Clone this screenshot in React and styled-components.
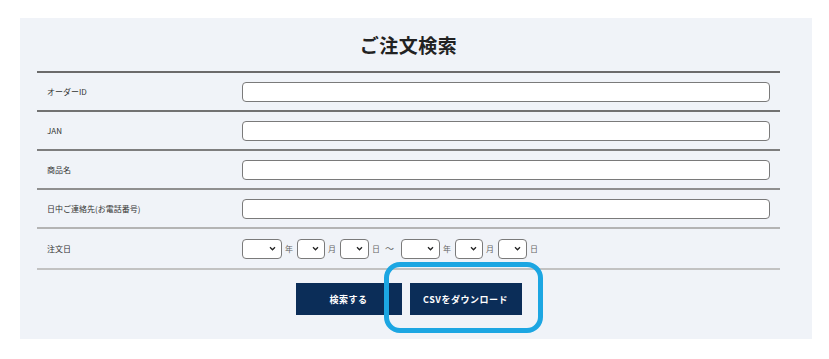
import React from 'react'
import styled, { createGlobalStyle } from 'styled-components'

const GlobalStyle = createGlobalStyle`
    body {
        margin: 0;
        background: #ffffff;
        font-family: "Noto Sans CJK JP", "Noto Sans", sans-serif;
    }
`

const fields = [
    { label: 'オーダーID', line: '#6b6b6b' },
    { label: 'JAN', line: '#727272' },
    { label: '商品名', line: '#7e7e7e' },
    { label: '日中ご連絡先(お電話番号)', line: '#8f8f8f' },
]

// small chevron drawn like the browser's select arrow
const chevron = encodeURIComponent(
    '<svg xmlns="http://www.w3.org/2000/svg" width="8" height="6" viewBox="0 0 8 6"><path d="M1 1.5 L4 4.5 L7 1.5" fill="none" stroke="#222" stroke-width="1.6"/></svg>'
)

function DateGroup({ yearWidth }) {
    return (
        <>
            <DateSelect $w={yearWidth}><option></option></DateSelect>
            <Unit>年</Unit>
            <DateSelect $w={28}><option></option></DateSelect>
            <Unit>月</Unit>
            <DateSelect $w={29}><option></option></DateSelect>
            <Unit>日</Unit>
        </>
    )
}

function App() {
    return (
        <Page>
            <GlobalStyle />
            <Panel>
                <Title>ご注文検索</Title>
                <Table>
                    {fields.map((f) => (
                        <Row key={f.label} $line={f.line}>
                            <Label>{f.label}</Label>
                            <Field>
                                <TextInput type="text" />
                            </Field>
                        </Row>
                    ))}
                    <Row $line="#b4b4b4" $tall>
                        <Label>注文日</Label>
                        <DateField>
                            <DateGroup yearWidth={40} />
                            <Tilde>〜</Tilde>
                            <DateGroup yearWidth={39} />
                        </DateField>
                    </Row>
                    <Buttons>
                        <Button>検索する</Button>
                        <Button $wide>CSVをダウンロード</Button>
                    </Buttons>
                </Table>
                <Highlight />
            </Panel>
        </Page>
    )
}

export default App


const Page = styled.div`
    padding: 18px 17px 20px 20px;
`

const Panel = styled.div`
    position: relative;
    background: #f0f3f8;
    height: 321px;
    box-sizing: border-box;
    padding: 0 32px 0 17px;
`

const Title = styled.h1`
    margin: 0;
    height: 53px;
    display: flex;
    align-items: center;
    justify-content: center;
    font-size: 19px;
    font-weight: 700;
    color: #222;
    letter-spacing: 0.5px;
`

const Table = styled.div`
    display: flex;
    flex-direction: column;
`

const Row = styled.div`
    display: grid;
    grid-template-columns: 205px 1fr;
    align-items: center;
    height: ${(p) => (p.$tall ? '39px' : '37px')};
    border-top: 2px solid ${(p) => p.$line};
`

const Label = styled.div`
    padding-left: 10px;
    font-size: 8px;
    font-weight: 400;
    color: #333;
`

const Field = styled.div`
    padding-right: 10px;
`

const TextInput = styled.input`
    display: block;
    width: 100%;
    height: 20px;
    box-sizing: border-box;
    border: 1px solid #7a7a7a;
    border-radius: 4px;
    background: #fff;
    outline: none;
`

const DateField = styled.div`
    display: flex;
    align-items: center;
    gap: 3px;
`

const DateSelect = styled.select`
    appearance: none;
    -webkit-appearance: none;
    width: ${(p) => p.$w}px;
    height: 20px;
    box-sizing: border-box;
    border: 1px solid #7a7a7a;
    border-radius: 4px;
    background: #fff url("data:image/svg+xml,${chevron}") no-repeat right 5px center;
    background-size: 7px 5px;
    font-size: 8px;
    padding: 0;
`

const Unit = styled.span`
    font-size: 8px;
    color: #666;
    margin-right: 1px;
`

const Tilde = styled.span`
    font-size: 9px;
    color: #666;
    margin: 0 4px 0 1px;
`

const Buttons = styled.div`
    border-top: 2px solid #c2c2c2;
    display: flex;
    justify-content: center;
    gap: 8px;
    padding-top: 13px;
`

const Button = styled.button`
    width: ${(p) => (p.$wide ? '112px' : '106px')};
    height: 32px;
    border: none;
    background: #0b2d58;
    color: #fff;
    font-family: "Noto Sans CJK JP", sans-serif;
    font-size: 9px;
    font-weight: 700;
    letter-spacing: 0.5px;
    cursor: pointer;
`

const Highlight = styled.div`
    position: absolute;
    left: 364px;
    top: 244px;
    width: 159px;
    height: 71px;
    box-sizing: border-box;
    border: 5px solid #1ca6e2;
    border-radius: 16px;
    pointer-events: none;
`
